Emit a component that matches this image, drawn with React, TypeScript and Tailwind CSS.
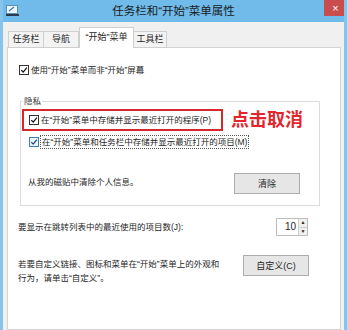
import React from "react";

function Box({ focus = false }: { focus?: boolean }) {
  return (
    <span
      className={`flex h-[10px] w-[10px] shrink-0 items-center justify-center border ${
        focus ? "border-[#3c7fb1] bg-[#eaf4fb]" : "border-[#333333] bg-white"
      }`}
    >
      <svg viewBox="0 0 10 10" className="h-[8px] w-[8px]">
        <path d="M1.5 5.2 L4 7.6 L8.6 2" fill="none" stroke={focus ? "#1f4e7a" : "#111"} strokeWidth="1.6" />
      </svg>
    </span>
  );
}

function Btn({ label, className = "" }: { label: React.ReactNode; className?: string }) {
  return (
    <div
      className={`flex h-[21px] w-[66px] shrink-0 items-center justify-center border border-[#adadad] bg-[#e6e6e6] text-[9px] ${className}`}
    >
      {label}
    </div>
  );
}

export default function App() {
  return (
    <div
      className="flex h-[330px] w-[347px] flex-col overflow-hidden whitespace-nowrap border-x-[3px] border-[#86c4ec] bg-[#f0f0f0] text-[#262626]"
      style={{ fontFamily: '"Liberation Sans", "Noto Sans CJK SC", sans-serif' }}
    >
      {/* title bar */}
      <div className="-mx-[3px] flex h-[22px] shrink-0 items-start bg-[#70bbea]">
        <svg viewBox="0 0 13 11" className="ml-[6px] mt-[5px] h-[11px] w-[13px]">
          <rect x="0.5" y="0.5" width="11" height="8" fill="#eef6fc" stroke="#5b8fb8" />
          <path d="M3 6 L8 2" stroke="#3a7ab5" strokeWidth="1.2" />
          <rect x="0" y="9" width="13" height="2" fill="#2b3a4a" />
        </svg>
        <div className="flex-1 pl-[4px] pt-[3px] text-center text-[11.5px] leading-[16px] text-[#1a1a1a]">
          任务栏和“开始”菜单属性
        </div>
        <div className="flex h-[16px] w-[23px] items-center justify-center bg-[#c94d4d] text-[11px] leading-none text-white">
          ×
        </div>
      </div>

      {/* body */}
      <div className="flex flex-1 flex-col pl-[4px] pr-[3px] pt-[5px]">
        {/* tabs */}
        <div className="relative z-10 -mb-px flex h-[21px] items-end pl-[1px] text-[9px]">
          <div className="flex h-[17px] w-[36px] items-center justify-center border border-[#cfcfcf] bg-[#f3f3f3]">任务栏</div>
          <div className="flex h-[17px] w-[35px] items-center justify-center border border-l-0 border-[#cfcfcf] bg-[#f3f3f3]">导航</div>
          <div className="flex h-[21px] w-[55px] items-start justify-center border border-b-0 border-[#cfcfcf] bg-white pt-[3px]">“开始”菜单</div>
          <div className="flex h-[17px] w-[33px] items-center justify-center border border-l-0 border-[#cfcfcf] bg-[#f3f3f3]">工具栏</div>
        </div>

        {/* panel */}
        <div className="flex flex-1 flex-col border border-[#d4d4d4] bg-white pl-[10px] pr-[31px] text-[8.5px] leading-[12px]">
          <div className="ml-[1px] mt-[16px] flex items-center gap-[2px]">
            <Box />
            <span>使用“开始”菜单而非“开始”屏幕</span>
          </div>

          <fieldset className="ml-[2px] mr-[-11px] mt-[19px] border border-[#dcdcdc] pb-[11px]">
            <legend className="ml-[2px] px-[1px] text-[#333]">隐私</legend>
            <div className="mt-[2px] flex items-center">
              <div className="ml-px flex h-[22px] w-[201px] shrink-0 items-center gap-[2px] border-2 border-[#d8262c] pl-[5px]">
                <Box />
                <span>在“开始”菜单中存储并显示最近打开的程序(P)</span>
              </div>
              <span className="ml-[8px] text-[18px] font-bold leading-[22px] text-[#e3262d]">点击取消</span>
            </div>
            <div className="ml-[8px] mt-[4px] flex items-center gap-[1px]">
              <Box focus />
              <span className="border border-dotted border-[#555] px-px leading-[12px]">
                在“开始”菜单和任务栏中存储并显示最近打开的项目(M)
              </span>
            </div>
            <div className="mt-[24px] flex items-center justify-between pl-[7px] pr-[19px]">
              <span className="-mt-[4px]">从我的磁贴中清除个人信息。</span>
              <Btn label="清除" />
            </div>
          </fieldset>

          <div className="mt-[12px] flex items-center justify-between">
            <span>要显示在跳转列表中的最近使用的项目数(J):</span>
            <div className="mr-px flex h-[18px] w-[32px] shrink-0 items-stretch border border-[#bdbdbd]">
              <span className="flex flex-1 items-center justify-end pr-[2px] text-[10px]">10</span>
              <div className="flex w-[9px] flex-col border-l border-[#d0d0d0]">
                <span className="flex flex-1 items-center justify-center border-b border-[#d0d0d0] bg-[#f0f0f0] text-[5px] leading-none">▲</span>
                <span className="flex flex-1 items-center justify-center bg-[#f0f0f0] text-[5px] leading-none">▼</span>
              </div>
            </div>
          </div>

          <div className="mt-[19px] flex items-start justify-between">
            <span className="mt-[2px] leading-[14px]">
              若要自定义链接、图标和菜单在“开始”菜单上的外观和
              <br />
              行为，请单击“自定义”。
            </span>
            <Btn label="自定义(C)" />
          </div>
        </div>
      </div>
    </div>
  );
}
